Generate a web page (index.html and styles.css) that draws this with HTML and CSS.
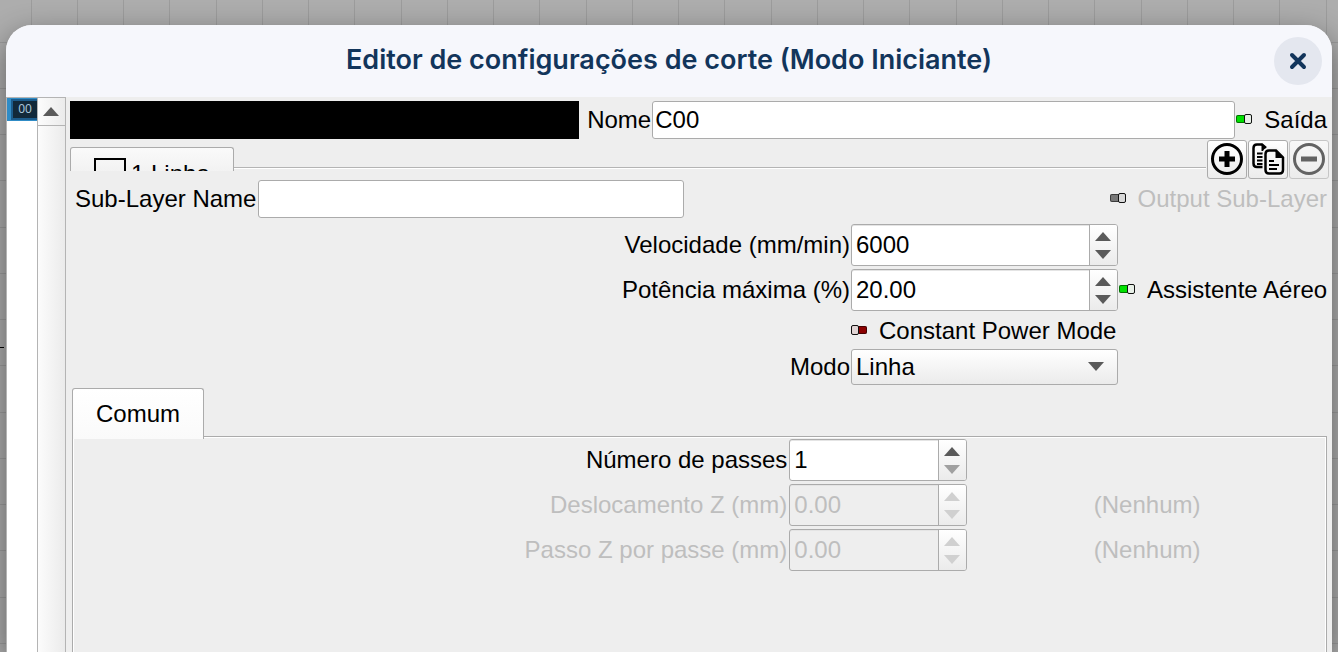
FILE: index.html
```html
<!DOCTYPE html>
<html lang="pt">
<head>
    <meta charset="UTF-8">
    <title>Editor de configurações de corte</title>
    <meta name="viewport" content="width=device-width, initial-scale=1.0">
    <link rel="stylesheet" href="styles.css">
</head>
<body>
    <span class="ruler-mark"></span>
    <main class="dialog">
        <header class="dialog-header">
            <h1>Editor de configurações de corte (Modo Iniciante)</h1>
            <button class="close" type="button" aria-label="Fechar">
                <svg width="18" height="18" viewBox="0 0 18 18"><path d="M3 3L15 15M15 3L3 15" stroke="#12355b" stroke-width="4" stroke-linecap="round"/></svg>
            </button>
        </header>

        <div class="dialog-body">
            <aside class="layers">
                <div class="layer-list">
                    <div class="layer"><span>00</span></div>
                </div>
                <div class="scrollbar">
                    <button type="button" aria-label="Rolar para cima">
                        <svg class="arrow" width="16" height="9" viewBox="0 0 16 9"><path d="M0 9L8 0L16 9Z"/></svg>
                    </button>
                </div>
            </aside>

            <form class="panel">
                <div class="row name-row">
                    <div class="swatch"></div>
                    <label for="nome">Nome</label>
                    <input class="field" id="nome" type="text" value="C00">
                    <label class="toggle"><input type="checkbox" checked>Saída</label>
                </div>

                <div class="sub-tabs">
                    <button class="sub-tab" type="button"><span class="line-icon"></span>1 Linha</button>
                    <div class="tab-rule"></div>
                    <div class="tools">
                        <button type="button" aria-label="Adicionar">
                            <svg width="34" height="34" viewBox="0 0 34 34" fill="none" stroke="#000"><circle cx="17" cy="17" r="14.5" stroke-width="3"/><path d="M17 9V25M9 17H25" stroke-width="5"/></svg>
                        </button>
                        <button type="button" aria-label="Duplicar">
                            <svg width="34" height="34" viewBox="0 0 34 34" fill="none" stroke="#000">
                                <path d="M12 25H6Q2.500 25 2.500 21.500V6Q2.500 2.500 6 2.500H11L15 6" stroke-width="2.500"/>
                                <path d="M10.500 1.500L16.500 7V9H10.500Z" fill="#000" stroke="none"/>
                                <path d="M6 11.500H13M6 15H13M6 18.500H13M6 22H13" stroke-width="2"/>
                                <path d="M18 8.500H25L32 15.500V28Q32 31.500 28.500 31.500H18Q14.500 31.500 14.500 28V12Q14.500 8.500 18 8.500Z" stroke="#f6f6f6" stroke-width="6"/>
                                <path d="M18 8.500H25L32 15.500V28Q32 31.500 28.500 31.500H18Q14.500 31.500 14.500 28V12Q14.500 8.500 18 8.500Z" fill="#f6f6f6" stroke-width="2.500"/>
                                <path d="M24.500 8V16H32Z" fill="#000" stroke="none"/>
                                <path d="M18 19H23M18 23H28M18 27H26" stroke-width="2"/>
                            </svg>
                        </button>
                        <button type="button" aria-label="Remover" disabled>
                            <svg width="34" height="34" viewBox="0 0 34 34" fill="none" stroke="#636363"><circle cx="17" cy="17" r="14.500" stroke-width="3"/><path d="M9 17H25" stroke-width="5"/></svg>
                        </button>
                    </div>
                </div>

                <div class="row sub-row">
                    <label for="sub-nome">Sub-Layer Name</label>
                    <input class="field" id="sub-nome" type="text">
                    <label class="toggle off"><input type="checkbox" checked disabled>Output Sub-Layer</label>
                </div>

                <div class="settings">
                    <label for="vel">Velocidade (mm/min)</label>
                    <div class="spin">
                        <input id="vel" type="text" inputmode="decimal" value="6000">
                        <div class="steps">
                            <button type="button" aria-label="Mais"><svg class="arrow" width="16" height="9" viewBox="0 0 16 9"><path d="M0 9L8 0L16 9Z"/></svg></button>
                            <button type="button" aria-label="Menos"><svg class="arrow" width="16" height="9" viewBox="0 0 16 9"><path d="M0 0L8 9L16 0Z"/></svg></button>
                        </div>
                    </div>
                    <span></span>

                    <label for="pot">Potência máxima (%)</label>
                    <div class="spin">
                        <input id="pot" type="text" inputmode="decimal" value="20.00">
                        <div class="steps">
                            <button type="button" aria-label="Mais"><svg class="arrow" width="16" height="9" viewBox="0 0 16 9"><path d="M0 9L8 0L16 9Z"/></svg></button>
                            <button type="button" aria-label="Menos"><svg class="arrow" width="16" height="9" viewBox="0 0 16 9"><path d="M0 0L8 9L16 0Z"/></svg></button>
                        </div>
                    </div>
                    <label class="toggle"><input type="checkbox" checked>Assistente Aéreo</label>

                    <label class="toggle power"><input type="checkbox">Constant Power Mode</label>

                    <label for="modo">Modo</label>
                    <div class="combo">
                        <select id="modo">
                            <option>Linha</option>
                        </select>
                        <svg class="arrow" width="16" height="9" viewBox="0 0 16 9"><path d="M0 0L8 9L16 0Z"/></svg>
                    </div>
                </div>

                <button class="tab" type="button">Comum</button>
                <section class="tab-page">
                    <label for="passes">Número de passes</label>
                    <div class="spin">
                        <input id="passes" type="text" inputmode="numeric" value="1">
                        <div class="steps">
                            <button type="button" aria-label="Mais"><svg class="arrow" width="16" height="9" viewBox="0 0 16 9"><path d="M0 9L8 0L16 9Z"/></svg></button>
                            <button type="button" aria-label="Menos" disabled><svg class="arrow" width="16" height="9" viewBox="0 0 16 9"><path d="M0 0L8 9L16 0Z"/></svg></button>
                        </div>
                    </div>
                    <span></span>

                    <label class="off" for="desl">Deslocamento Z (mm)</label>
                    <div class="spin spin-off">
                        <input id="desl" type="text" value="0.00" disabled>
                        <div class="steps">
                            <button type="button" aria-label="Mais" disabled><svg class="arrow" width="16" height="9" viewBox="0 0 16 9"><path d="M0 9L8 0L16 9Z"/></svg></button>
                            <button type="button" aria-label="Menos" disabled><svg class="arrow" width="16" height="9" viewBox="0 0 16 9"><path d="M0 0L8 9L16 0Z"/></svg></button>
                        </div>
                    </div>
                    <span class="off note">(Nenhum)</span>

                    <label class="off" for="passo">Passo Z por passe (mm)</label>
                    <div class="spin spin-off">
                        <input id="passo" type="text" value="0.00" disabled>
                        <div class="steps">
                            <button type="button" aria-label="Mais" disabled><svg class="arrow" width="16" height="9" viewBox="0 0 16 9"><path d="M0 9L8 0L16 9Z"/></svg></button>
                            <button type="button" aria-label="Menos" disabled><svg class="arrow" width="16" height="9" viewBox="0 0 16 9"><path d="M0 0L8 9L16 0Z"/></svg></button>
                        </div>
                    </div>
                    <span class="off note">(Nenhum)</span>
                </section>
            </form>
        </div>
    </main>
</body>
</html>
```
FILE: styles.css
```css
* {
    box-sizing: border-box;
}

/* Área de trabalho com a grade */
body {
    margin: 0;
    height: 100vh;
    overflow: hidden;
    display: flex;
    flex-direction: column;
    padding: 25px 6px 0;
    font-family: "Liberation Sans", Arial, sans-serif;
    font-size: 24px;
    line-height: 28px;
    color: #000;
    background-color: #adadad;
    background-image:
        linear-gradient(to right, #9c9c9c 1px, transparent 1px 46px, #9c9c9c 46px 47px, transparent 47px 92px, #9c9c9c 92px 93px, transparent 93px 138px, #9c9c9c 138px 139px, transparent 139px),
        linear-gradient(#9c9c9c 1px, transparent 1px 46px, #9c9c9c 46px 47px, transparent 47px 92px, #9c9c9c 92px 93px, transparent 93px 138px, #9c9c9c 138px 139px, transparent 139px);
    background-size: 185px 185px;
    background-position: 31px 42px;
}

.ruler-mark {
    position: absolute;
    left: 0;
    top: 347px;
    width: 4px;
    height: 1px;
    background: #000;
    z-index: 1;
}

button,
input,
select {
    font: inherit;
    color: inherit;
    margin: 0;
}

button {
    padding: 0;
    border: none;
    background: none;
}

svg {
    display: block;
}

.dialog {
    flex: 1;
    display: flex;
    flex-direction: column;
    background: #eee;
    border-radius: 26px 26px 0 0;
    overflow: hidden;
    box-shadow: 0 10px 30px rgba(0, 0, 0, 0.45);
}

.dialog-header {
    display: grid;
    grid-template-columns: 48px 1fr 48px;
    align-items: center;
    height: 72px;
    padding: 0 10px;
    background: #f6f7fc;
}

.dialog-header h1 {
    grid-column: 2;
    margin: 0;
    padding-bottom: 2px;
    text-align: center;
    font-family: Inter, sans-serif;
    font-size: 27px;
    line-height: 32px;
    font-weight: 600;
    color: #12355b;
}

.close {
    display: flex;
    align-items: center;
    justify-content: center;
    width: 48px;
    height: 48px;
    border-radius: 50%;
    background: #e4e7ef;
}

.dialog-body {
    flex: 1;
    display: flex;
}

/* Lista de camadas */
.layers {
    display: flex;
    width: 60px;
    border: 1px solid #b4b4b4;
    border-bottom: none;
}

.layer-list {
    flex: 1;
    background: #fff;
}

.layer {
    height: 23px;
    padding: 1px 0 1px 4px;
    background: #308cc6;
}

.layer span {
    display: block;
    height: 21px;
    border: 2px solid #1c5c8c;
    border-right: none;
    background: #12293a;
    color: #a9c6da;
    font-family: "Noto Sans", sans-serif;
    font-size: 12px;
    line-height: 16px;
    text-align: center;
}

.scrollbar {
    width: 28px;
    border-left: 1px solid #b4b4b4;
    background: linear-gradient(to right, #fcfcfc, #ebebeb);
}

.scrollbar button {
    display: flex;
    align-items: center;
    justify-content: center;
    width: 100%;
    height: 28px;
    padding-right: 1px;
    border-bottom: 1px solid #b4b4b4;
}

.arrow {
    fill: #5a5a5a;
}

/* Painel principal */
.panel {
    flex: 1;
    padding: 4px 3px 0 4px;
    display: flex;
    flex-direction: column;
}

.row {
    display: flex;
    align-items: center;
}

.field {
    height: 38px;
    min-width: 0;
    padding: 0 2px;
    border: 1px solid #ababab;
    border-radius: 3px;
    background: #fff;
}

.off {
    color: #bebebe;
}

.swatch {
    flex: 15;
    height: 38px;
    margin-right: 8px;
    background: #000;
}

.name-row .field {
    flex: 17;
    margin: 0 1px;
}

.toggle {
    display: flex;
    align-items: center;
    gap: 12px;
    padding-right: 2px;
    white-space: nowrap;
}

.toggle input {
    appearance: none;
    flex: none;
    display: flex;
    align-items: center;
    width: 16px;
    height: 8px;
    margin-bottom: 2px;
    border-radius: 2px;
    background: #8b0000;
    box-shadow: inset 0 0 0 1px rgba(0, 0, 0, 0.5);
}

.toggle input::before {
    content: "";
    box-sizing: border-box;
    flex: none;
    width: 8px;
    height: 10px;
    border: 1px solid #111;
    border-radius: 2px;
    background: #e0d4d4;
}

.toggle input:checked {
    justify-content: flex-end;
    background: #00e000;
}

.toggle input:checked::before {
    background: #e8f0e8;
}

.toggle input:disabled {
    background: #777;
}

.toggle input:disabled::before {
    background: #d8d8d8;
}

/* Abas das subcamadas */
.sub-tabs {
    display: flex;
    height: 41px;
}

.sub-tab {
    display: flex;
    align-items: flex-start;
    gap: 5px;
    width: 164px;
    height: 24px;
    margin-top: 8px;
    padding: 10px 0 0 23px;
    overflow: hidden;
    line-height: 32px;
    border: 1px solid #ababab;
    border-bottom: none;
    border-radius: 3px 3px 0 0;
    background: linear-gradient(#fafafa, #f2f2f2);
}

.line-icon {
    width: 32px;
    height: 32px;
    flex: none;
    border: 2px solid #000;
}

.tab-rule {
    flex: 1;
    height: 2px;
    margin: 28px 1px 0 0;
    border-top: 1px solid #b4b4b4;
    background: #fff;
}

.tools {
    display: flex;
    gap: 1px;
    padding-top: 1px;
}

.tools button {
    display: flex;
    align-items: center;
    justify-content: center;
    width: 40px;
    height: 39px;
    padding-bottom: 2px;
    border: 1px solid #ababab;
    border-radius: 3px;
    background: linear-gradient(#fff, #ececec);
}

.tools button:disabled {
    border-color: #c6c6c6;
    background: linear-gradient(#f8f8f8, #ececec);
}

.sub-row {
    padding-left: 5px;
}

.sub-row .field {
    width: 426px;
    margin: 0 auto 0 2px;
}

/* Velocidade, potência e modo */
.settings {
    display: grid;
    grid-template-columns: 1fr 267px 210px;
    gap: 3px 1px;
    align-items: center;
    padding-top: 6px;
}

.settings > label:not(.toggle),
.tab-page > label {
    text-align: right;
}

.power {
    grid-column: 2 / 4;
    height: 32px;
    padding-top: 2px;
}

.spin {
    display: flex;
    height: 42px;
    border: 1px solid #ababab;
    border-radius: 3px;
    overflow: hidden;
    background: #fff;
    box-shadow: inset 0 1px 0 #e4e4e4;
}

.spin input {
    flex: 1;
    min-width: 0;
    padding: 0 4px;
    border: none;
    background: none;
}

.spin-off {
    background: #eee;
    color: #bebebe;
}

.steps {
    display: flex;
    flex-direction: column;
    width: 28px;
    padding: 2px 1px 2px 0;
    border-left: 1px solid #ababab;
    background: linear-gradient(#fff, #ebebeb);
}

.steps button {
    flex: 1;
    display: flex;
    align-items: center;
    justify-content: center;
}

.steps button:disabled .arrow {
    fill: #a0a0a0;
}

.spin-off .steps button:disabled .arrow {
    fill: #d0d0d0;
}

.combo {
    position: relative;
}

.combo select {
    display: block;
    appearance: none;
    width: 100%;
    height: 36px;
    padding: 0 4px;
    border: 1px solid #ababab;
    border-radius: 3px;
    background: linear-gradient(#fff, #ebebeb);
}

.combo .arrow {
    position: absolute;
    right: 14px;
    top: 13px;
    pointer-events: none;
}

/* Aba Comum */
.tab {
    position: relative;
    align-self: flex-start;
    width: 132px;
    height: 51px;
    margin: 3px 0 0 2px;
    padding-bottom: 1px;
    border: 1px solid #ababab;
    border-bottom: none;
    border-radius: 3px 3px 0 0;
    background: linear-gradient(#fff, #fafafa);
}

.tab-page {
    flex: 1;
    display: grid;
    grid-template-columns: 2fr 178px 1fr;
    gap: 3px 1px;
    align-content: start;
    align-items: center;
    margin: -3px 2px 0;
    padding-top: 2px;
    border: 1px solid #ababab;
    border-bottom: none;
    box-shadow: inset -1px 1px 0 #fff, inset 1px 0 0 #fff;
}

.tab-page > label {
    padding-right: 1px;
}

.note {
    text-align: center;
}
```
